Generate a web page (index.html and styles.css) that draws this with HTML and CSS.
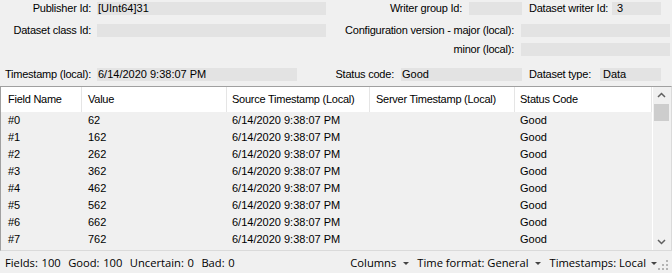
FILE: index.html
```html
<!DOCTYPE html>
<html lang="en">
<head>
    <meta charset="UTF-8">
    <title>Dataset Message</title>
    <link rel="stylesheet" href="styles.css">
</head>
<body>
    <div class="window">
        <div class="form">
            <div class="row row-1">
                <span class="lbl lbl-left">Publisher Id:</span>
                <span class="box box-left">[UInt64]31</span>
                <span class="lbl lbl-group">Writer group Id:</span>
                <span class="box box-group"></span>
                <span class="lbl lbl-writer">Dataset writer Id:</span>
                <span class="box box-writer">3</span>
            </div>
            <div class="row row-2">
                <span class="lbl lbl-left">Dataset class Id:</span>
                <span class="box box-left"></span>
                <span class="lbl lbl-config">Configuration version - major (local):</span>
                <span class="box box-config"></span>
            </div>
            <div class="row row-3">
                <span class="spacer"></span>
                <span class="lbl lbl-config">minor (local):</span>
                <span class="box box-config"></span>
            </div>
            <div class="row row-4">
                <span class="lbl lbl-left">Timestamp (local):</span>
                <span class="box box-time">6/14/2020 9:38:07 PM</span>
                <span class="lbl lbl-status">Status code:</span>
                <span class="box box-status">Good</span>
                <span class="lbl lbl-type">Dataset type:</span>
                <span class="box box-type">Data</span>
            </div>
        </div>

        <div class="list">
            <div class="list-body">
                <div class="list-head">
                    <div class="cell c1">Field Name</div>
                    <div class="cell c2">Value</div>
                    <div class="cell c3">Source Timestamp (Local)</div>
                    <div class="cell c4">Server Timestamp (Local)</div>
                    <div class="cell c5">Status Code</div>
                </div>
                <div id="rows" class="list-rows"></div>
            </div>
            <div class="vscroll">
                <svg class="arrow" width="17" height="17" viewBox="0 0 17 17"><polyline points="5,10 8.5,6.5 12,10" fill="none" stroke="#606060" stroke-width="1.5"/></svg>
                <div class="thumb"></div>
                <div class="track"></div>
                <svg class="arrow" width="17" height="17" viewBox="0 0 17 17"><polyline points="5,7 8.5,10.5 12,7" fill="none" stroke="#606060" stroke-width="1.5"/></svg>
            </div>
        </div>

        <div class="statusbar">
            <span class="counts">Fields: 100&nbsp; Good: 100&nbsp; Uncertain: 0&nbsp; Bad: 0</span>
            <span class="drop">Columns<i class="caret"></i></span>
            <span class="drop">Time format: General<i class="caret"></i></span>
            <span class="drop drop-last">Timestamps: Local<i class="caret"></i></span>
            <svg class="grip" width="12" height="12" viewBox="0 0 12 12">
                <rect x="9" y="1" width="2" height="2" fill="#b4b4b4"/>
                <rect x="9" y="5" width="2" height="2" fill="#b4b4b4"/>
                <rect x="5" y="5" width="2" height="2" fill="#b4b4b4"/>
                <rect x="9" y="9" width="2" height="2" fill="#b4b4b4"/>
                <rect x="5" y="9" width="2" height="2" fill="#b4b4b4"/>
                <rect x="1" y="9" width="2" height="2" fill="#b4b4b4"/>
            </svg>
        </div>
    </div>

    <script>
        const rows = document.getElementById('rows');
        for (let i = 0; i < 8; i++) {
            const row = document.createElement('div');
            row.className = 'list-row';
            const values = ['#' + i, String(i * 100 + 62), '6/14/2020 9:38:07 PM', '', 'Good'];
            values.forEach((v, n) => {
                const cell = document.createElement('div');
                cell.className = 'cell c' + (n + 1);
                cell.textContent = v;
                row.appendChild(cell);
            });
            rows.appendChild(row);
        }
    </script>
</body>
</html>
```

FILE: styles.css
```css
body {
    margin: 0;
    background-color: #f0f0f0;
    font-family: "Liberation Sans", Arial, sans-serif;
    font-size: 11px;
    color: #000;
    overflow: hidden;
}
.window {
    width: 672px;
    height: 273px;
    display: flex;
    flex-direction: column;
}
.form {
    height: 86px;
}
.row {
    display: flex;
    height: 13px;
    line-height: 13px;
}
.row-1 { margin-top: 2px; }
.row-2 { margin-top: 9px; }
.row-3 { margin-top: 6px; }
.row-4 { margin-top: 12px; }
.lbl {
    white-space: nowrap;
    letter-spacing: -0.22px;
}
.box {
    background-color: #e3e3e3;
    padding-left: 1px;
    box-sizing: border-box;
    white-space: nowrap;
}
.lbl-left { width: 91px; text-align: right; }
.box-left { margin-left: 6px; width: 229px; }
.lbl-group { width: 136px; text-align: right; }
.box-group { margin-left: 7px; width: 53px; }
.lbl-writer { margin-left: 7px; width: 83px; }
.box-writer { width: 49px; padding-left: 5px; }
.spacer { width: 326px; }
.lbl-config { width: 188px; text-align: right; }
.box-config { margin-left: 7px; width: 149px; }
.box-time { margin-left: 6px; width: 200px; }
.lbl-status { width: 97px; text-align: right; }
.box-status { margin-left: 7px; width: 121px; }
.lbl-type { width: 69px; text-align: right; }
.box-type { margin-left: 9px; width: 61px; padding-left: 3px; }

.list {
    height: 165px;
    box-sizing: border-box;
    border-top: 1px solid #a0a0a0;
    border-left: 1px solid #a0a0a0;
    border-right: 1px solid #dadada;
    border-bottom: 1px solid #dadada;
    display: flex;
}
.list-body {
    width: 651px;
}
.list-head {
    display: flex;
    height: 25px;
    background: #fff;
}
.list-head .cell {
    line-height: 25px;
    letter-spacing: -0.25px;
    border-right: 1px solid #e5e5e5;
}
.list-row {
    display: flex;
    height: 17px;
    line-height: 17px;
}
.cell {
    box-sizing: border-box;
    padding-left: 6px;
    white-space: nowrap;
    overflow: hidden;
}
.c1 { width: 81px; padding-left: 7px; }
.c2 { width: 145px; }
.c3 { width: 143px; padding-left: 5px; }
.c4 { width: 145px; }
.c5 { width: 137px; padding-left: 5px; }

.vscroll {
    width: 18px;
    border-left: 1px solid #fff;
    box-sizing: border-box;
    display: flex;
    flex-direction: column;
}
.arrow {
    display: block;
    flex: none;
}
.thumb {
    height: 17px;
    margin: 0 1px;
    background: #cdcdcd;
}
.track {
    flex: 1;
}

.statusbar {
    flex: 1;
    display: flex;
    align-items: center;
    font-family: "Open Sans", "Noto Sans", sans-serif;
    font-size: 11.2px;
    padding-left: 5px;
}
.counts {
    flex: 1;
    white-space: nowrap;
    word-spacing: 0.8px;
}
.drop {
    margin-right: 8px;
    white-space: nowrap;
}
.drop-last {
    margin-right: 0;
}
.caret {
    display: inline-block;
    width: 0;
    height: 0;
    margin-left: 7px;
    vertical-align: middle;
    border-left: 3px solid transparent;
    border-right: 3px solid transparent;
    border-top: 3px solid #444;
}
.drop-last .caret {
    margin-left: 5px;
}
.grip {
    margin: 6px 3px 0 0;
}
```
